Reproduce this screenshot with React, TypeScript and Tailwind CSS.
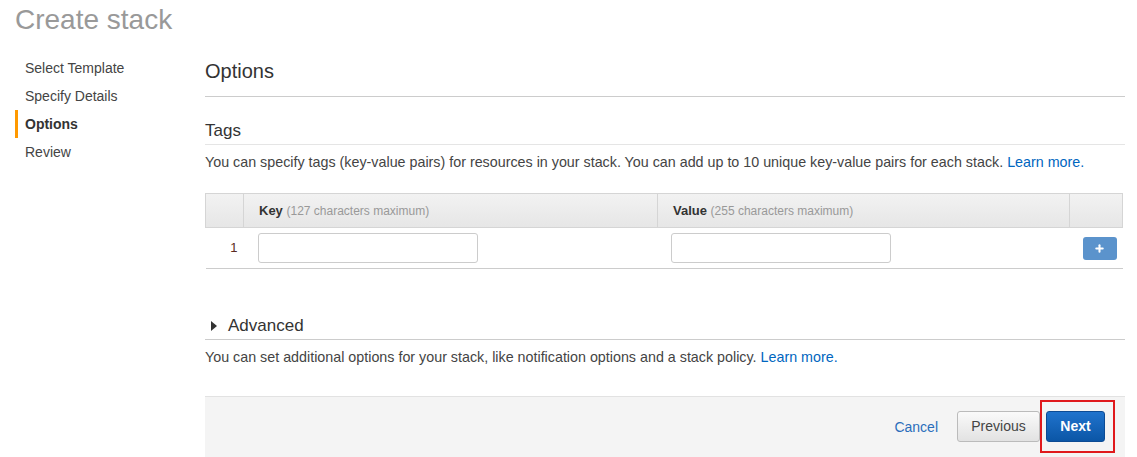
import { Plus } from 'lucide-react';

const NAV = ['Select Template', 'Specify Details', 'Options', 'Review'];

export default function App() {
  return (
    <div className="w-[1137px] h-[457px] overflow-hidden bg-white text-[#444] font-['Liberation_Sans',Arial,sans-serif]">
      <h1 className="pl-[15px] pt-[2px] text-[28px] leading-[36px] text-[#999]">Create stack</h1>

      <div className="flex mt-[20px]">
        {/* Wizard steps */}
        <nav className="w-[205px] shrink-0 pl-[15px] -mt-[4px]">
          {NAV.map((item) => (
            <div
              key={item}
              className={`h-[28px] flex items-center pl-[7px] border-l-[3px] text-[14px] ${
                item === 'Options' ? 'border-[#f90] font-bold text-[#333]' : 'border-transparent text-[#444]'
              }`}
            >
              {item}
            </div>
          ))}
        </nav>

        <main className="w-[920px]">
          <h2 className="text-[20px] leading-[24px] text-[#333] pt-[1px] pb-[13px] border-b border-[#ccc]">Options</h2>

          {/* Tags */}
          <h3 className="mt-[24px] text-[17px] leading-[20px] text-[#333] pb-[3px] border-b border-[#e5e5e5]">Tags</h3>
          <p className="mt-[8px] text-[14.3px] leading-[18px] text-[#444]">
            You can specify tags (key-value pairs) for resources in your stack. You can add up to 10 unique key-value pairs for each stack.{' '}
            <a className="text-[#0066c0]">Learn more.</a>
          </p>

          <table className="mt-[22px] w-[918px] border-collapse text-[13px]">
            <thead>
              <tr className="h-[34px] bg-gradient-to-b from-[#f2f2f2] to-[#e6e6e6]">
                <th className="w-[38px] border border-[#d5d5d5]" />
                <th className="w-[414px] border border-[#d5d5d5] pl-[15px] text-left font-bold text-[#333]">
                  Key <span className="font-normal text-[12px] text-[#999]">(127 characters maximum)</span>
                </th>
                <th className="w-[412px] border border-[#d5d5d5] pl-[15px] text-left font-bold text-[#333]">
                  Value <span className="font-normal text-[12px] text-[#999]">(255 characters maximum)</span>
                </th>
                <th className="border border-[#d5d5d5]" />
              </tr>
            </thead>
            <tbody>
              <tr className="h-[41px] border-b border-[#ccc]">
                <td className="text-right pr-[6px] text-[13px] text-[#5a2a22]">1</td>
                <td className="pl-[14px]">
                  <input className="w-[220px] h-[30px] border border-[#ccc] rounded-[3px] bg-white" />
                </td>
                <td className="pl-[13px]">
                  <input className="w-[220px] h-[30px] border border-[#ccc] rounded-[3px] bg-white" />
                </td>
                <td className="text-right pr-[6px]">
                  <button className="inline-flex items-center justify-center w-[34px] h-[23px] rounded-[3px] bg-[#5b93cc] align-middle">
                    <Plus size={11} strokeWidth={4.5} className="text-white" />
                  </button>
                </td>
              </tr>
            </tbody>
          </table>

          {/* Advanced */}
          <div className="mt-[47px] flex items-center gap-[11px] pl-[6px] pb-[3px] border-b border-[#ccc]">
            <span className="w-0 h-0 border-y-[5px] border-y-transparent border-l-[6px] border-l-[#333]" />
            <span className="text-[17px] leading-[20px] text-[#333]">Advanced</span>
          </div>
          <p className="mt-[8px] text-[14.3px] leading-[18px] text-[#444]">
            You can set additional options for your stack, like notification options and a stack policy.{' '}
            <a className="text-[#0066c0]">Learn more.</a>
          </p>

          {/* Footer */}
          <div className="mt-[30px] h-[70px] bg-[#f4f4f4] border-t border-[#e2e2e2] flex items-start justify-end pr-[10px] pt-[3px]">
            <a className="mt-[17px] mr-[19px] text-[14px] text-[#2a6ebb]">Cancel</a>
            <button className="mt-[11px] w-[83px] h-[31px] rounded-[3px] border border-[#bbb] bg-gradient-to-b from-[#fafafa] to-[#e2e2e2] text-[14px] text-[#444]">
              Previous
            </button>
            <div className="pt-[9px] pb-[9px] pl-[4px] pr-[8px] border-2 border-[#e0191c]">
              <button className="w-[59px] h-[31px] rounded-[3px] border border-[#0c4b94] bg-gradient-to-b from-[#1f73cd] to-[#0b56a6] text-[14px] font-bold text-white">
                Next
              </button>
            </div>
          </div>
        </main>
      </div>
    </div>
  );
}
